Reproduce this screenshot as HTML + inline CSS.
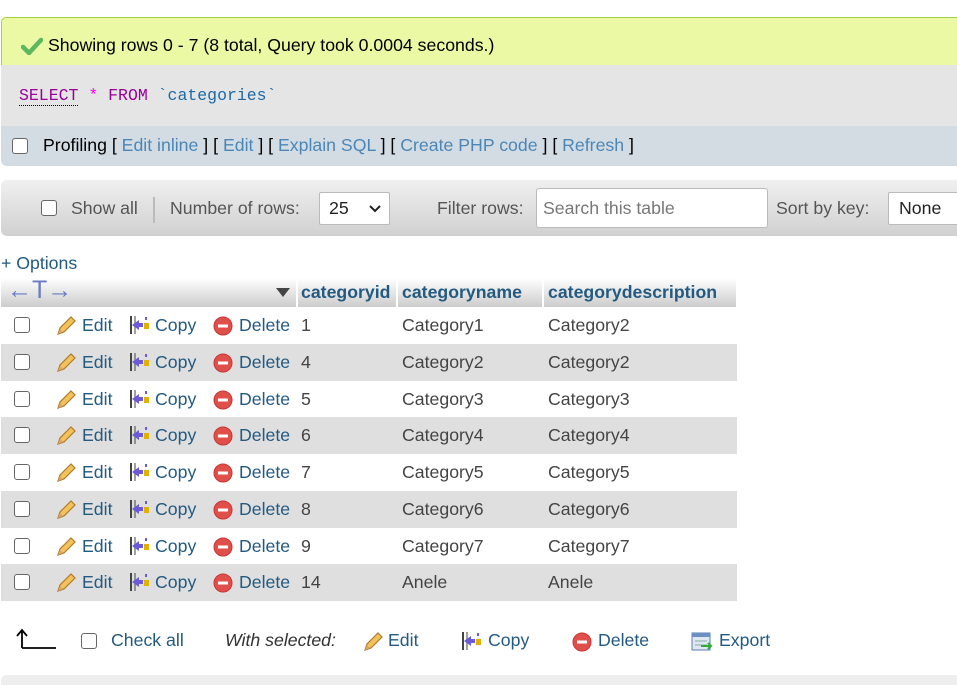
<!DOCTYPE html>
<html><head><meta charset="utf-8"><style>
*{margin:0;padding:0;box-sizing:border-box}
body{width:957px;height:681px;overflow:hidden;background:#fff;font-family:"Liberation Sans",Arial,sans-serif;font-size:17.7px;color:#444;position:relative}
.a{position:absolute;white-space:nowrap}
.lnk{color:#235a81}
.cb{position:absolute;width:16px;height:16px;border:1.5px solid #666;border-radius:3px;background:#fff}
.row{position:absolute;left:1px;width:736px;height:37px}
.g{background:#dfdfdf}
</style></head><body>
<div class="a" style="left:1px;top:17px;width:960px;height:49px;background:#ebf8a4;border:1px solid #a2d246;border-bottom:none;border-radius:5px 0 0 0"></div>
<svg class="a" style="left:21px;top:37px" width="22" height="18" viewBox="0 0 22 18"><path d="M2 10 L8 16 L20 3" stroke="#5cb85c" stroke-width="4.5" fill="none" stroke-linecap="round"/></svg>
<div class="a" style="left:48px;top:35px;color:#000">Showing rows 0 - 7 (8 total, Query took 0.0004 seconds.)</div>
<div class="a" style="left:1px;top:65px;width:960px;height:61px;background:#e5e5e5"></div>
<div class="a" style="left:19px;top:86px;font-family:'Liberation Mono',monospace;font-size:16.5px"><span style="color:#909;border-bottom:1px dotted #000">SELECT</span> <span style="color:#f0f">*</span> <span style="color:#909">FROM</span> <span style="color:#1a6aa8">`categories`</span></div>
<div class="a" style="left:1px;top:126px;width:960px;height:40px;background:#d3dce3;border-radius:0 0 0 6px"></div>
<div class="cb" style="left:12px;top:138px"></div>
<div class="a" style="left:43px;top:135px;color:#000">Profiling [ <span style="color:#4a87b8">Edit inline</span> ] [ <span style="color:#4a87b8">Edit</span> ] [ <span style="color:#4a87b8">Explain SQL</span> ] [ <span style="color:#4a87b8">Create PHP code</span> ] [ <span style="color:#4a87b8">Refresh</span> ]</div>
<div class="a" style="left:1px;top:180px;width:960px;height:56px;background:linear-gradient(#f0f0f0,#d0d0d0);border-radius:6px 0 0 6px"></div>
<div class="cb" style="left:41px;top:200px"></div>
<div class="a" style="left:71px;top:198px;color:#555">Show all</div>
<div class="a" style="left:153px;top:197px;width:2px;height:26px;background:#bbb"></div>
<div class="a" style="left:170px;top:198px;color:#555">Number of rows:</div>
<div class="a" style="left:319px;top:192px;width:71px;height:33px;background:#fff;border:1px solid #bbb;border-radius:2px"></div>
<div class="a" style="left:329px;top:198px;color:#222">25</div>
<svg class="a" style="left:369px;top:204px" width="12" height="10"><path d="M1 2 L6 7 L11 2" stroke="#222" stroke-width="2" fill="none"/></svg>
<div class="a" style="left:437px;top:198px;color:#555">Filter rows:</div>
<div class="a" style="left:536px;top:188px;width:232px;height:40px;background:#fff;border:1px solid #bbb;border-radius:3px"></div>
<div class="a" style="left:543px;top:198px;color:#777">Search this table</div>
<div class="a" style="left:776px;top:198px;color:#555">Sort by key:</div>
<div class="a" style="left:888px;top:192px;width:80px;height:33px;background:#fff;border:1px solid #bbb;border-radius:2px"></div>
<div class="a" style="left:899px;top:198px;color:#222">None</div>
<div class="a lnk" style="left:1px;top:253px">+ Options</div>
<div class="a" style="left:1px;top:278px;width:735px;height:29px;background:linear-gradient(#fff,#ccc)"></div>
<div class="a" style="left:296px;top:278px;width:2px;height:29px;background:#fff"></div>
<div class="a" style="left:396px;top:278px;width:2px;height:29px;background:#fff"></div>
<div class="a" style="left:542px;top:278px;width:2px;height:29px;background:#fff"></div>
<div class="a" style="left:7px;top:276px;color:#6a7bc4;font-size:25px">←T→</div>
<svg class="a" style="left:276px;top:288px" width="14" height="10"><path d="M0 0 H14 L7 9Z" fill="#444"/></svg>
<div class="a" style="left:301px;top:282px;color:#235a81;font-weight:bold">categoryid</div>
<div class="a" style="left:402px;top:282px;color:#235a81;font-weight:bold">categoryname</div>
<div class="a" style="left:548px;top:282px;color:#235a81;font-weight:bold">categorydescription</div>

<svg width="0" height="0" style="position:absolute"><defs>
<g id="pen"><path d="M3 19 L5 13 L16 2 L20 6 L9 17Z" fill="#f3c25a" stroke="#b07b2a" stroke-width="1.2"/><path d="M3 19 L5 14 L8 17Z" fill="#d9a56b"/></g>
<g id="cp"><rect x="1" y="1" width="2" height="18" fill="#444"/><rect x="5" y="1" width="2" height="18" fill="#444" opacity=".5"/><path d="M3 10 L10 5 L10 8 L14 8 L14 12 L10 12 L10 15Z" fill="#6c5ad8"/><rect x="15" y="8" width="5" height="6" fill="#e2b000"/><rect x="16" y="2" width="2" height="3" fill="#6c5ad8"/></g>
<g id="dl"><circle cx="10" cy="10" r="9" fill="#e0504a" stroke="#c33" stroke-width="1"/><rect x="5" y="8.5" width="10" height="3" fill="#fff"/></g>
</defs></svg>

<div id="rows"></div>
<script>
var d=[["1","Category1","Category2"],["4","Category2","Category2"],["5","Category3","Category3"],["6","Category4","Category4"],["7","Category5","Category5"],["8","Category6","Category6"],["9","Category7","Category7"],["14","Anele","Anele"]];
var h="";
d.forEach(function(r,i){var t=307+i*36.75;
h+='<div class="row'+(i%2?' g':'')+'" style="top:'+t+'px"></div>';
h+='<div class="cb" style="left:14px;top:'+(t+10)+'px"></div>';
h+='<svg class="a" style="left:55px;top:'+(t+8)+'px" width="22" height="22"><use href="#pen"/></svg>';
h+='<div class="a lnk" style="left:82px;top:'+(t+8)+'px">Edit</div>';
h+='<svg class="a" style="left:129px;top:'+(t+8)+'px" width="22" height="22"><use href="#cp"/></svg>';
h+='<div class="a lnk" style="left:155px;top:'+(t+8)+'px">Copy</div>';
h+='<svg class="a" style="left:213px;top:'+(t+9)+'px" width="20" height="20"><use href="#dl"/></svg>';
h+='<div class="a lnk" style="left:239px;top:'+(t+8)+'px">Delete</div>';
h+='<div class="a" style="left:301px;top:'+(t+8)+'px">'+r[0]+'</div>';
h+='<div class="a" style="left:402px;top:'+(t+8)+'px">'+r[1]+'</div>';
h+='<div class="a" style="left:548px;top:'+(t+8)+'px">'+r[2]+'</div>';
});
document.getElementById('rows').innerHTML=h;
</script>
<svg class="a" style="left:15px;top:628px" width="42" height="22"><path d="M7 20 V3 M2 8 L7 2 L12 8 M7 20 H41" stroke="#000" stroke-width="1.8" fill="none"/></svg>
<div class="cb" style="left:81px;top:633px"></div>
<div class="a lnk" style="left:111px;top:630px">Check all</div>
<div class="a" style="left:225px;top:630px;font-style:italic;color:#333">With selected:</div>
<svg class="a" style="left:362px;top:631px" width="22" height="22"><use href="#pen"/></svg>
<div class="a lnk" style="left:388px;top:630px">Edit</div>
<svg class="a" style="left:461px;top:631px" width="22" height="22"><use href="#cp"/></svg>
<div class="a lnk" style="left:488px;top:630px">Copy</div>
<svg class="a" style="left:572px;top:632px" width="20" height="20"><use href="#dl"/></svg>
<div class="a lnk" style="left:598px;top:630px">Delete</div>
<svg class="a" style="left:691px;top:632px" width="22" height="20"><rect x="1" y="1" width="18" height="17" fill="#dfe8f2" stroke="#5a7fb0"/><rect x="1" y="1" width="18" height="4" fill="#6c8fc4"/><path d="M4 9H16M4 13H16" stroke="#8aa"/><path d="M10 14 H20 M17 11 L20 14 L17 17" stroke="#3a3" stroke-width="2" fill="none"/></svg>
<div class="a lnk" style="left:719px;top:630px">Export</div>
<div class="a" style="left:1px;top:675px;width:960px;height:10px;background:#eee;border-radius:5px 0 0 0"></div>
</body></html>
